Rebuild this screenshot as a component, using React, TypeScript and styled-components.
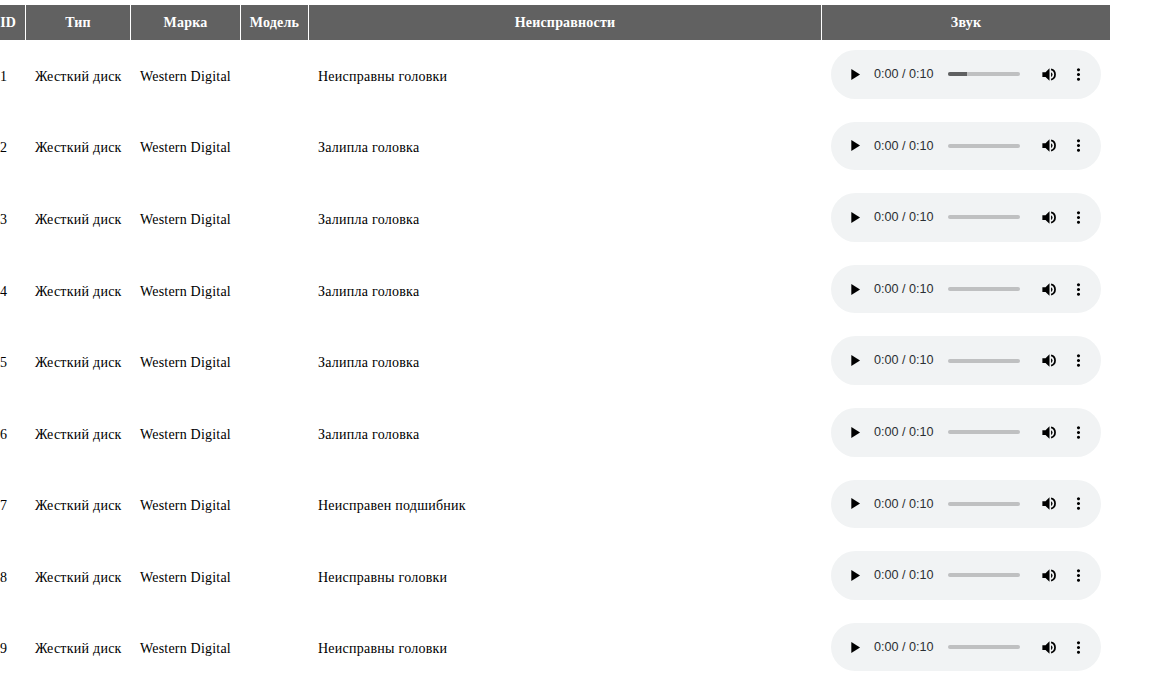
import React from 'react';
import styled, { createGlobalStyle } from 'styled-components';

const GlobalStyle = createGlobalStyle`
  html, body {
    margin: 0;
    padding: 0;
    height: 676px;
    overflow: hidden;
    background: #fff;
    font-family: "Liberation Serif", "Times New Roman", serif;
    font-size: 14px;
    color: #000;
  }
`;

const Table = styled.table`
  width: 1110px;
  margin-top: 5px;
  border-collapse: separate;
  border-spacing: 0;
  table-layout: fixed;
`;

const HeadCell = styled.th<{ $w: number }>`
  width: ${(p) => p.$w}px;
  height: 35px;
  box-sizing: border-box;
  padding: 0;
  background: #616161;
  color: #fff;
  font-size: 14px;
  font-weight: bold;
  letter-spacing: 0.2px;
  text-align: center;
  border-right: 1px solid #fff;

  &:first-child {
    padding-right: 9px;
    letter-spacing: 0;
  }

  &:last-child {
    border-right: none;
  }
`;

const Cell = styled.td<{ $latin?: boolean }>`
  height: 71.6px;
  box-sizing: border-box;
  padding: 1.9px 0 0 9px;
  vertical-align: middle;
  white-space: nowrap;
  letter-spacing: ${(p) => (p.$latin ? '0.2px' : '0.25px')};

  &:first-child {
    padding-left: 0;
  }
`;

const Player = styled.div`
  display: flex;
  align-items: center;
  width: 270px;
  height: 48.6px;
  margin: 0 0 4.9px 0;
  padding: 0 12px 0 14px;
  box-sizing: border-box;
  border-radius: 25px;
  background: #f1f3f4;
  font-family: "Liberation Sans", Arial, sans-serif;
  font-size: 12.6px;
  letter-spacing: 0;
  color: #2b2f33;
`;

const PlayIcon = styled.svg`
  width: 19px;
  height: 19px;
  flex: none;
`;

const Time = styled.span`
  margin: 0 0 0.6px 10px;
  width: 60px;
  flex: none;
`;

const Track = styled.div`
  flex: none;
  width: 72px;
  height: 4px;
  margin-left: 14px;
  border-radius: 2px;
  background: #bfc0c1;
  overflow: hidden;
`;

const Progress = styled.div`
  height: 100%;
  background: #5f6061;
`;

const SoundIcon = styled.svg`
  width: 19px;
  height: 19px;
  flex: none;
  margin-left: 20px;
`;

const MenuIcon = styled.svg`
  width: 19px;
  height: 19px;
  flex: none;
  margin-left: 10px;
`;

type Row = { id: number; fault: string };

const rows: Row[] = [
  { id: 1, fault: 'Неисправны головки' },
  { id: 2, fault: 'Залипла головка' },
  { id: 3, fault: 'Залипла головка' },
  { id: 4, fault: 'Залипла головка' },
  { id: 5, fault: 'Залипла головка' },
  { id: 6, fault: 'Залипла головка' },
  { id: 7, fault: 'Неисправен подшибник' },
  { id: 8, fault: 'Неисправны головки' },
  { id: 9, fault: 'Неисправны головки' },
];

function AudioPlayer({ played }: { played: number }) {
  return (
    <Player>
      <PlayIcon viewBox="0 0 24 24">
        <path d="M8 5v14l11-7z" fill="#000" />
      </PlayIcon>
      <Time>0:00 / 0:10</Time>
      <Track>
        <Progress style={{ width: `${played}%` }} />
      </Track>
      <SoundIcon viewBox="0 0 24 24">
        <path d="M3 9v6h4l5 5V4L7 9H3z" fill="#000" />
        <path d="M14 9a3.4 3.4 0 0 1 0 6z" fill="#000" />
        <path d="M14 5.6a6.6 6.6 0 0 1 0 12.8" fill="none" stroke="#000" strokeWidth="2.2" />
      </SoundIcon>
      <MenuIcon viewBox="0 0 24 24">
        <path
          d="M12 8c1.1 0 2-.9 2-2s-.9-2-2-2-2 .9-2 2 .9 2 2 2zm0 2c-1.1 0-2 .9-2 2s.9 2 2 2 2-.9 2-2-.9-2-2-2zm0 6c-1.1 0-2 .9-2 2s.9 2 2 2 2-.9 2-2-.9-2-2-2z"
          fill="#000"
        />
      </MenuIcon>
    </Player>
  );
}

function App() {
  return (
    <>
      <GlobalStyle />
      <Table>
        <thead>
          <tr>
            <HeadCell $w={26}>ID</HeadCell>
            <HeadCell $w={105}>Тип</HeadCell>
            <HeadCell $w={110}>Марка</HeadCell>
            <HeadCell $w={68}>Модель</HeadCell>
            <HeadCell $w={513}>Неисправности</HeadCell>
            <HeadCell $w={288}>Звук</HeadCell>
          </tr>
        </thead>
        <tbody>
          {rows.map((row) => (
            <tr key={row.id}>
              <Cell>{row.id}</Cell>
              <Cell>Жесткий диск</Cell>
              <Cell $latin>Western Digital</Cell>
              <Cell />
              <Cell>{row.fault}</Cell>
              <Cell>
                <AudioPlayer played={row.id === 1 ? 26 : 0} />
              </Cell>
            </tr>
          ))}
        </tbody>
      </Table>
    </>
  );
}

export default App;
